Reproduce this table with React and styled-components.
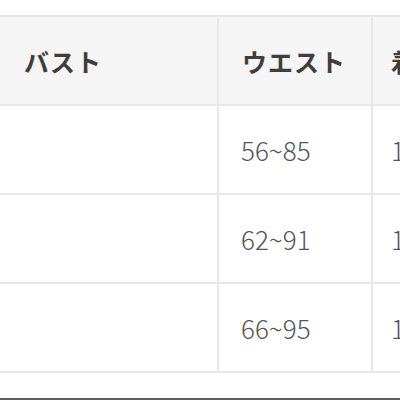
import React from "react";
import styled, { createGlobalStyle } from "styled-components";

const GlobalStyle = createGlobalStyle`
  html, body {
    margin: 0;
    padding: 0;
    background: #fff;
    overflow: hidden;
  }
  * {
    box-sizing: border-box;
  }
`;

const rows = [
  { bust: "", waist: "56~85", length: "155~165" },
  { bust: "", waist: "62~91", length: "160~170" },
  { bust: "", waist: "66~95", length: "165~175" },
];

const App = () => {
  return (
    <>
      <GlobalStyle />
      <Page>
        <Table>
          <Row $head>
            <Cell $head $width={219} $pad={24}>バスト</Cell>
            <Cell $head $width={154} $pad={23}>ウエスト</Cell>
            <Cell $head $width={200} $pad={18}>着丈</Cell>
          </Row>
          {rows.map((r) => (
            <Row key={r.waist}>
              <Cell $width={219} $pad={24}>{r.bust}</Cell>
              <Cell $width={154} $pad={22}>{r.waist}</Cell>
              <Cell $width={200} $pad={18}>{r.length}</Cell>
            </Row>
          ))}
        </Table>
      </Page>
    </>
  );
};

export default App;

const Page = styled.div`
  width: 400px;
  height: 400px;
  padding-top: 15px;
  border-bottom: 2px solid #5e5e5e;
  overflow: hidden;
  font-family: "Noto Sans CJK JP", "Noto Sans", sans-serif;
`;

const Table = styled.div`
  display: flex;
  flex-direction: column;
  width: 573px;
  border-top: 2px solid #e8e8e8;
`;

const Row = styled.div`
  display: flex;
  flex-direction: row;
  height: 89px;
  background: ${(p) => (p.$head ? "#f5f5f5" : "#fff")};
  border-bottom: 2px solid #e8e8e8;
`;

const Cell = styled.div`
  display: flex;
  align-items: center;
  flex: none;
  width: ${(p) => p.$width}px;
  padding-left: ${(p) => p.$pad}px;
  border-right: 2px solid #e8e8e8;
  font-size: ${(p) => (p.$head ? 25 : 26)}px;
  font-weight: ${(p) => (p.$head ? 700 : 300)};
  color: ${(p) => (p.$head ? "#3e3e3e" : "#555")};
  white-space: nowrap;
  letter-spacing: ${(p) => (p.$head ? "1px" : "0")};
`;
